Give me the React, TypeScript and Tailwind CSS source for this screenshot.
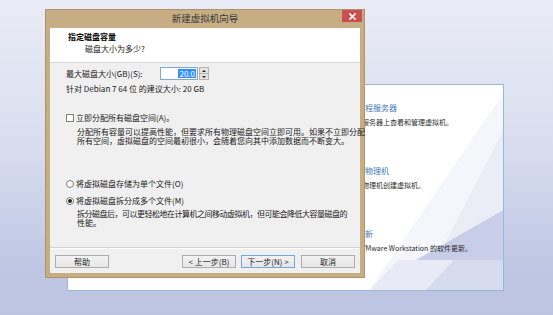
import React from "react";

function Checkbox() {
  return <span className="block w-[8px] h-[8px] border border-[#7d7d7d] bg-white shrink-0" />;
}

function Radio({ checked }: { checked?: boolean }) {
  return (
    <span className="flex items-center justify-center w-[8px] h-[8px] rounded-full border border-[#7d7d7d] bg-white shrink-0">
      {checked ? <span className="block w-[4px] h-[4px] rounded-full bg-[#262626]" /> : null}
    </span>
  );
}

function Btn({ children, focused }: { children: React.ReactNode; focused?: boolean }) {
  return (
    <div
      className={
        "w-[54px] h-[13px] flex items-center justify-center text-[8px] leading-none text-[#1e1e1e] bg-[linear-gradient(180deg,#f3f3f3_0%,#e6e6e6_100%)] border " +
        (focused ? "border-[#6fa8e0]" : "border-[#adadad]")
      }
    >
      {children}
    </div>
  );
}

export default function App() {
  return (
    <div className="relative w-[553px] h-[315px] overflow-hidden bg-[linear-gradient(180deg,#e9ecf6_0%,#d9deef_45%,#bec6e3_85%,#bcc4e2_100%)] font-['Noto_Sans_CJK_SC',sans-serif] text-[#1a1a1a]">
      {/* background VMware home panel */}
      <div className="absolute left-[67px] top-[84px] w-[437px] h-[207px] border border-[#93bbd6] bg-white overflow-hidden">
        <svg className="absolute inset-0" width="437" height="207" viewBox="0 0 437 207">
          <polygon points="437,6 437,207 300,207" fill="#f4f6fb" />
          <polygon points="437,42 437,207 352,207" fill="#eaedf6" />
          <polygon points="348,175 437,124 437,175" fill="#c8cee8" />
          <polygon points="300,207 330,175 437,175 437,207" fill="#e8ebf5" />
          <polygon points="356,207 386,175 437,175 437,207" fill="#d6dbee" />
        </svg>
        <div className="relative flex flex-col pl-[273px] pt-[18px] whitespace-nowrap">
          <div className="text-[8px] leading-[10px] text-[#3f78b8]">连接远程服务器</div>
          <div className="mt-[4px] text-[7px] leading-[10px] text-[#2b2b2b]">在远程服务器上查看和管理虚拟机。</div>
          <div className="mt-[39px] text-[8px] leading-[10px] text-[#3f78b8]">虚拟化物理机</div>
          <div className="mt-[4px] ml-[14px] text-[7px] leading-[10px] text-[#2b2b2b]">从物理机创建虚拟机。</div>
          <div className="mt-[39px] text-[8px] leading-[10px] text-[#3f78b8]">软件更新</div>
          <div className="mt-[4px] ml-[5px] text-[7px] leading-[10px] text-[#2b2b2b]">检查 VMware Workstation 的软件更新。</div>
        </div>
      </div>

      {/* wizard dialog */}
      <div className="absolute left-[45px] top-[9px] w-[320px] h-[269px] bg-[#c7ad84] border border-[#ad946c] flex flex-col px-[4px] pb-[4px]">
        <div className="relative h-[18px] flex items-center justify-center text-[9.5px] leading-none text-[#3a3a3a]">
          新建虚拟机向导
          <div className="absolute right-[-2px] top-0 w-[20px] h-[12px] bg-[#c9504f] flex items-center justify-center">
            <svg width="7" height="7" viewBox="0 0 7 7">
              <path d="M1 1 L6 6 M6 1 L1 6" stroke="#ffffff" strokeWidth="1.6" strokeLinecap="square" />
            </svg>
          </div>
        </div>

        <div className="flex-1 flex flex-col bg-[#f0f0f0]">
          {/* header */}
          <div className="h-[34px] bg-white pl-[18px] pt-[4px] flex flex-col">
            <div className="text-[8px] leading-[10px] font-bold text-black">指定磁盘容量</div>
            <div className="mt-[2px] pl-[17px] text-[8px] leading-[10px] text-[#1a1a1a]">磁盘大小为多少?</div>
          </div>
          <div className="h-px bg-[#d7d7d7]" />

          {/* body */}
          <div className="flex-1 flex flex-col px-[16px] pt-[4px] text-[8px] whitespace-nowrap">
            <div className="h-[13px] flex items-center">
              <span className="w-[94px] leading-none">最大磁盘大小(GB)(S):</span>
              <div className="w-[38px] h-[13px] bg-white border border-[#7ea9d8] flex items-center justify-end pr-[1px]">
                <span className="bg-[#3390ff] text-white leading-[9px] px-px">20.0</span>
              </div>
              <div className="w-[10px] h-[13px] flex flex-col ml-px">
                <div className="flex-1 bg-[#e4e4e4] border border-[#b5b5b5] flex items-center justify-center">
                  <svg width="4" height="2" viewBox="0 0 4 2"><polygon points="0,2 4,2 2,0" fill="#222" /></svg>
                </div>
                <div className="flex-1 bg-[#e4e4e4] border border-t-0 border-[#b5b5b5] flex items-center justify-center">
                  <svg width="4" height="2" viewBox="0 0 4 2"><polygon points="0,0 4,0 2,2" fill="#222" /></svg>
                </div>
              </div>
            </div>
            <div className="mt-[4px] leading-[10px]">针对 Debian 7 64 位 的建议大小: 20 GB</div>

            <div className="mt-[19px] h-[10px] flex items-center gap-[2px]">
              <Checkbox />
              <span className="leading-none">立即分配所有磁盘空间(A)。</span>
            </div>
            <div className="mt-[4px] ml-[11px] leading-[9px]">
              <div>分配所有容量可以提高性能，但要求所有物理磁盘空间立即可用。如果不立即分配</div>
              <div>所有空间，虚拟磁盘的空间最初很小，会随着您向其中添加数据而不断变大。</div>
            </div>

            <div className="mt-[34px] h-[10px] flex items-center gap-[2px]">
              <Radio />
              <span className="leading-none">将虚拟磁盘存储为单个文件(O)</span>
            </div>
            <div className="mt-[7px] h-[10px] flex items-center gap-[2px]">
              <Radio checked />
              <span className="leading-none">将虚拟磁盘拆分成多个文件(M)</span>
            </div>
            <div className="mt-[3px] ml-[11px] leading-[9px]">
              <div className="tracking-[-0.5px]">拆分磁盘后，可以更轻松地在计算机之间移动虚拟机，但可能会降低大容量磁盘的</div>
              <div>性能。</div>
            </div>
          </div>

          {/* footer */}
          <div className="h-px bg-[#d3d3d3]" />
          <div className="h-px bg-white" />
          <div className="h-[24px] px-[5px] pt-[6px] flex justify-between">
            <Btn>帮助</Btn>
            <div className="flex">
              <Btn>&lt; 上一步(B)</Btn>
              <div className="ml-[5px]">
                <Btn focused>下一步(N) &gt;</Btn>
              </div>
              <div className="ml-[6px]">
                <Btn>取消</Btn>
              </div>
            </div>
          </div>
        </div>
      </div>
    </div>
  );
}
